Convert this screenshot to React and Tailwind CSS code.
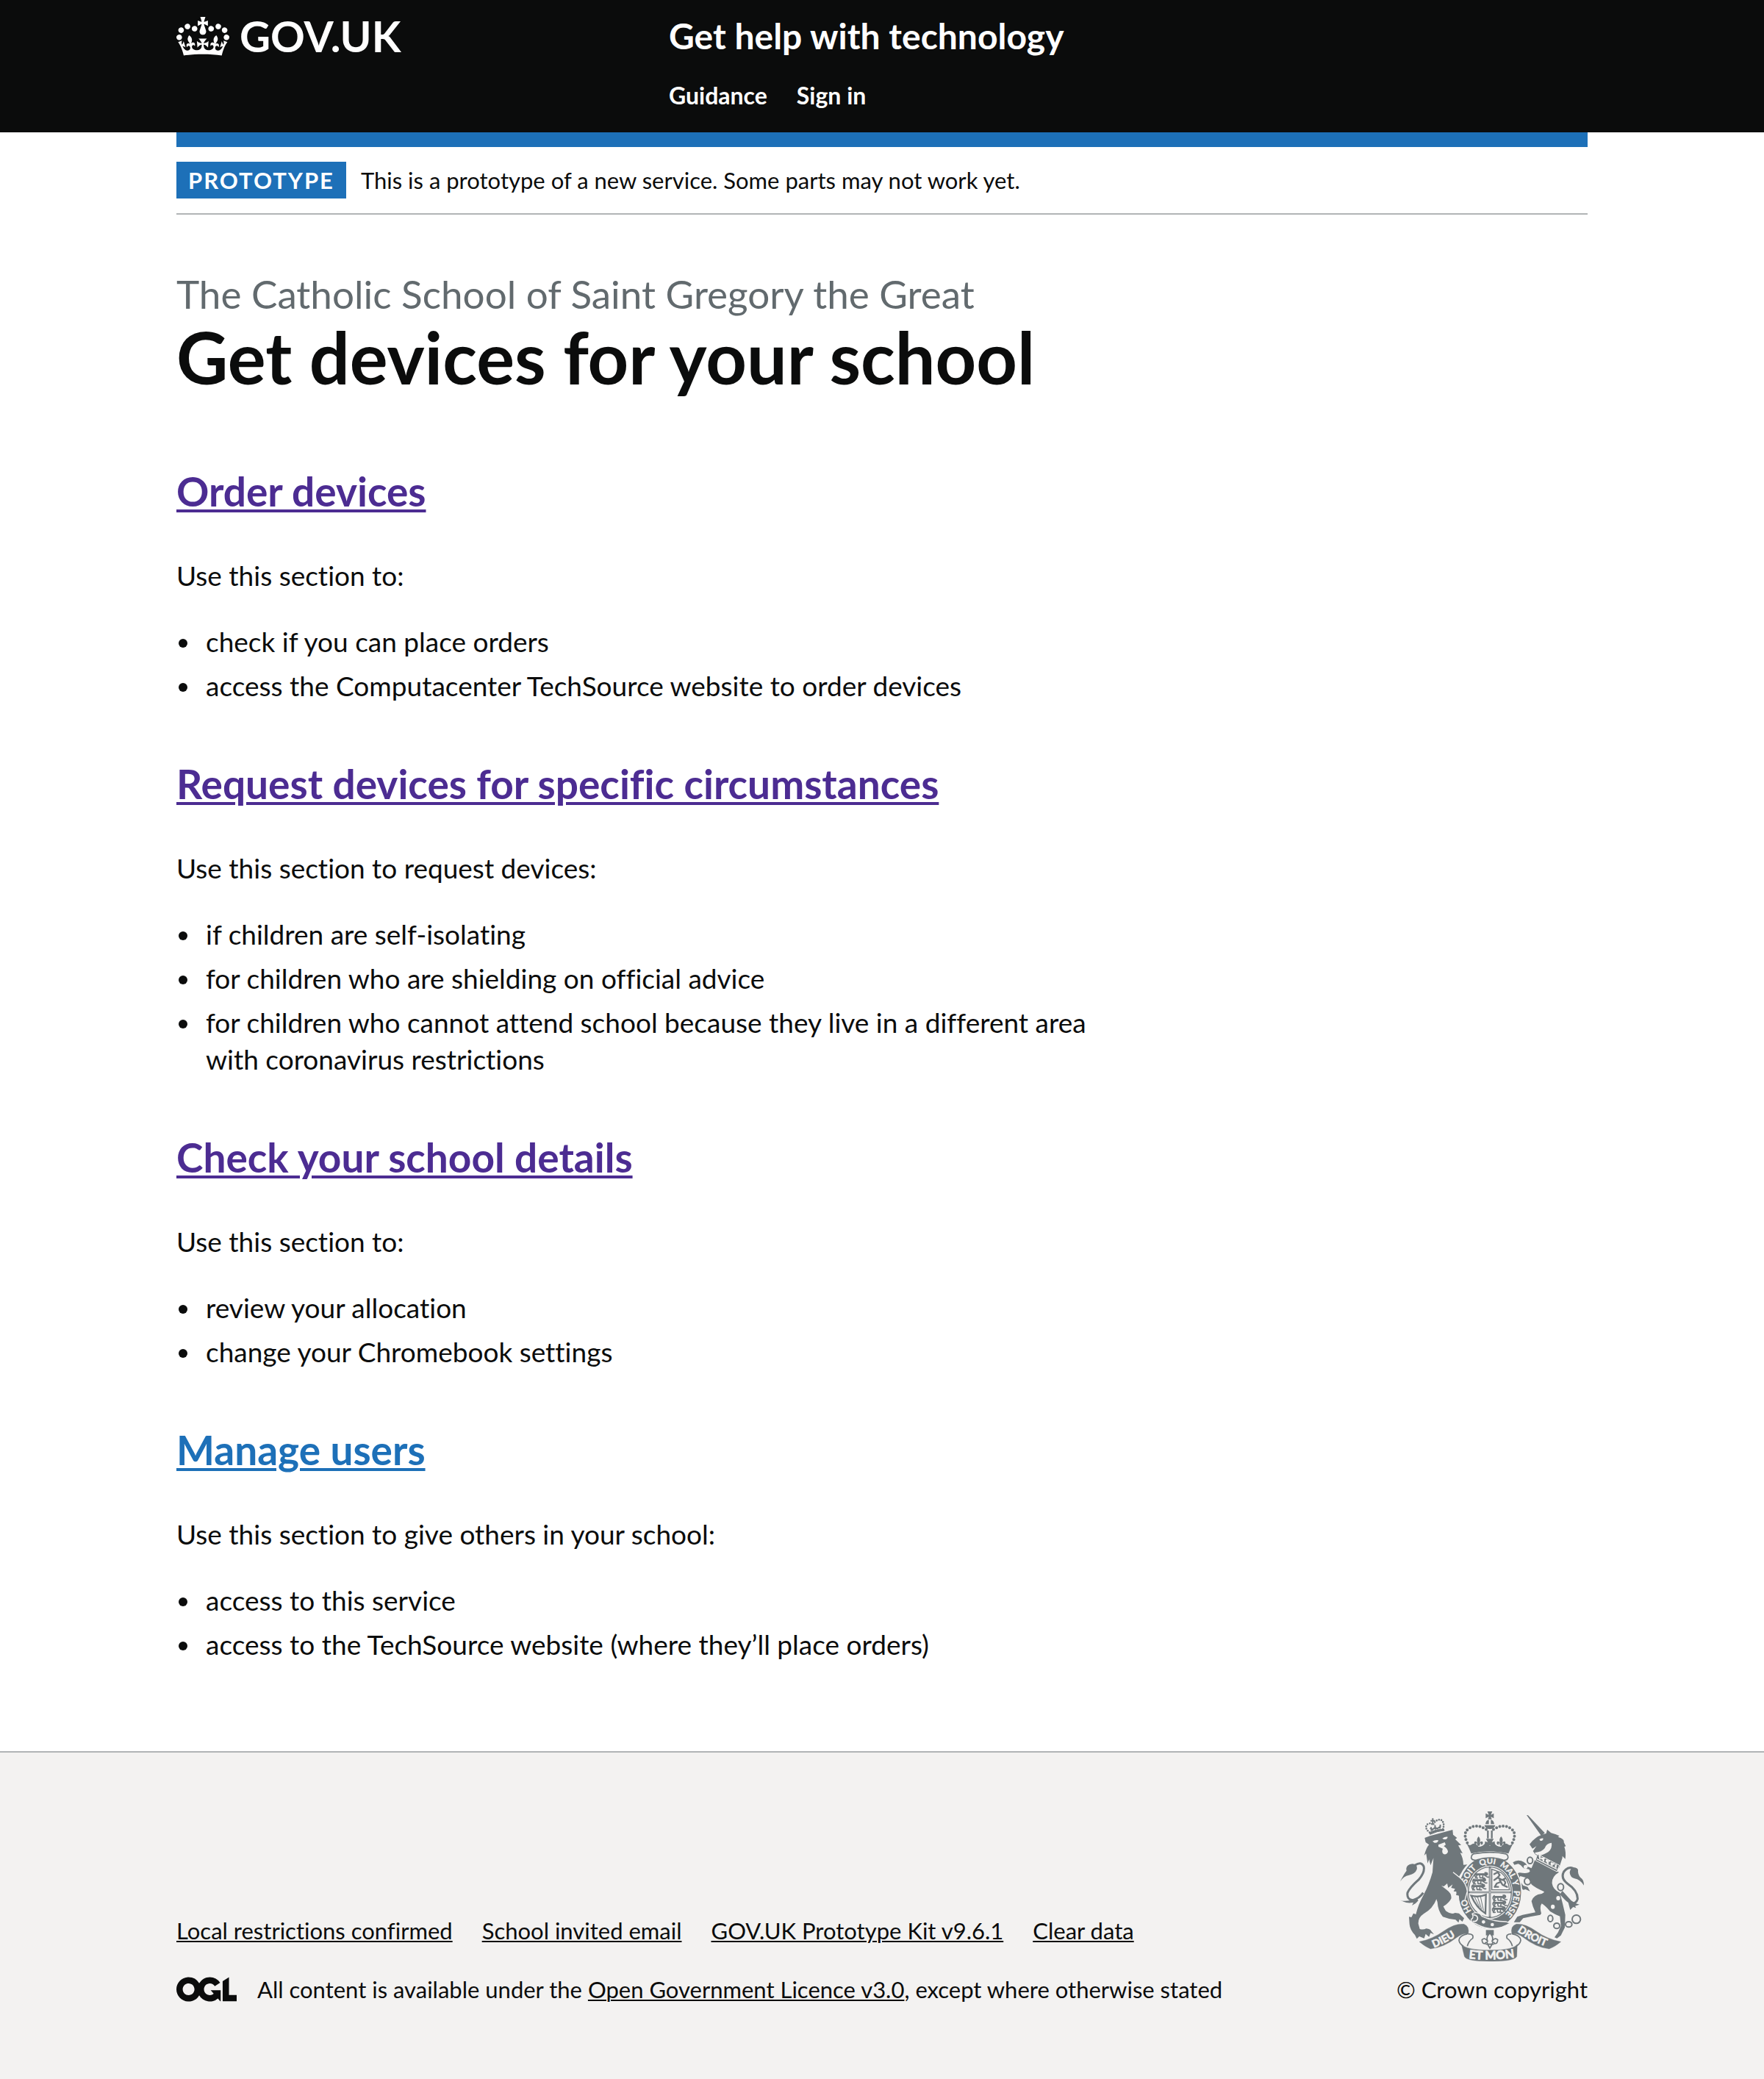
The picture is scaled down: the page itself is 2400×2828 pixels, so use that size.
const sections = [
  {
    title: "Order devices",
    visited: true,
    intro: "Use this section to:",
    items: ["check if you can place orders", "access the Computacenter TechSource website to order devices"],
  },
  {
    title: "Request devices for specific circumstances",
    visited: true,
    intro: "Use this section to request devices:",
    items: [
      "if children are self-isolating",
      "for children who are shielding on official advice",
      "for children who cannot attend school because they live in a different area with coronavirus restrictions",
    ],
  },
  {
    title: "Check your school details",
    visited: true,
    intro: "Use this section to:",
    items: ["review your allocation", "change your Chromebook settings"],
  },
  {
    title: "Manage users",
    visited: false,
    intro: "Use this section to give others in your school:",
    items: ["access to this service", "access to the TechSource website (where they’ll place orders)"],
  },
];

const footerLinks = ["Local restrictions confirmed", "School invited email", "GOV.UK Prototype Kit v9.6.1", "Clear data"];

function Crown() {
  return (
    <svg aria-hidden="true" viewBox="0 0 132 97" className="h-[53px] w-[72px]" fill="currentColor">
      <path d="M25 30.2c3.5 1.5 7.7-.2 9.1-3.7 1.5-3.6-.2-7.8-3.9-9.2-3.6-1.4-7.6.3-9.1 3.9-1.4 3.5.3 7.5 3.9 9zM9 39.5c3.6 1.5 7.8-.2 9.2-3.7 1.5-3.6-.2-7.8-3.9-9.1-3.6-1.5-7.6.2-9.1 3.8-1.4 3.5.3 7.5 3.8 9zM4.4 57.2c3.5 1.5 7.7-.2 9.1-3.8 1.5-3.6-.2-7.7-3.9-9.1-3.5-1.5-7.6.3-9.1 3.8-1.4 3.5.3 7.6 3.9 9.1zm38.3-21.4c3.5 1.5 7.7-.2 9.1-3.8 1.5-3.6-.2-7.7-3.9-9.1-3.6-1.5-7.6.3-9.1 3.8-1.3 3.6.4 7.7 3.9 9.1zm64.4-5.6c-3.6 1.5-7.8-.2-9.1-3.7-1.5-3.6.2-7.8 3.8-9.2 3.6-1.4 7.7.3 9.2 3.9 1.3 3.5-.4 7.5-3.9 9zm15.9 9.3c-3.6 1.5-7.7-.2-9.1-3.7-1.5-3.6.2-7.8 3.7-9.1 3.6-1.5 7.7.2 9.2 3.8 1.5 3.5-.3 7.5-3.8 9zm4.7 17.7c-3.6 1.5-7.8-.2-9.2-3.8-1.5-3.6.2-7.7 3.9-9.1 3.6-1.5 7.7.3 9.2 3.8 1.3 3.5-.4 7.6-3.9 9.1zM89.3 35.8c-3.6 1.5-7.8-.2-9.2-3.8-1.4-3.6.2-7.7 3.9-9.1 3.6-1.5 7.7.3 9.2 3.8 1.4 3.6-.3 7.7-3.9 9.1zM69.7 17.7l8.9 4.7V9.3l-8.9 2.8c-.2-.3-.5-.6-.9-.9L72.4 0H59.6l3.5 11.2c-.3.3-.6.5-.9.9l-8.8-2.8v13.1l8.8-4.7c.3.3.6.7.9.9l-5 15.4v.1c-.2.8-.4 1.6-.4 2.4 0 4.1 3.1 7.5 7 8.1h.2c.3 0 .7.1 1 .1.4 0 .7 0 1-.1h.2c4-.6 7.1-4.1 7.1-8.1 0-.8-.1-1.7-.4-2.4V34l-5.1-15.4c.4-.2.7-.6 1-.9zM66 92.8c16.9 0 32.8 1.1 47.1 3.2 4-16.9 8.9-26.7 14-33.5l-9.6-3.4c1 4.9 1.1 7.2 0 10.2-1.5-1.4-3-4.3-4.2-8.7L108.6 76c2.8-2 5-3.2 7.5-3.3-4.4 9.4-10 11.9-13.6 11.2-4.3-.8-6.3-4.6-5.6-7.9 1-4.7 5.7-5.9 8-.5 4.3-8.7-3-11.4-7.6-8.8 7.1-7.2 7.9-13.5 2.1-21.1-8 6.1-8.1 12.3-4.5 20.8-4.7-5.4-12.1-2.5-9.5 6.2 3.4-5.2 7.9-2 7.2 3.1-.6 4.3-6.4 7.8-13.5 7.2-10.3-.9-10.9-8-11.2-13.8 2.5-.5 7.1 1.8 11 7.3L80.2 60c-4.1 4.4-8 5.3-12.3 5.4 1.4-4.4 8-11.6 8-11.6H55.5s6.4 7.2 7.9 11.6c-4.2-.1-8-1-12.3-5.4l1.4 16.4c3.9-5.5 8.5-7.7 10.9-7.3-.3 5.8-.9 12.8-11.1 13.8-7.2.6-12.9-2.9-13.5-7.2-.7-5 3.8-8.3 7.1-3.1 2.7-8.7-4.6-11.6-9.4-6.2 3.7-8.5 3.6-14.7-4.6-20.8-5.8 7.6-5 13.9 2.2 21.1-4.7-2.6-11.9.1-7.7 8.8 2.3-5.5 7.1-4.2 8.1.5.7 3.3-1.3 7.1-5.7 7.9-3.5.7-9-1.8-13.5-11.2 2.5.1 4.7 1.3 7.5 3.3l-4.7-15.4c-1.2 4.4-2.7 7.2-4.3 8.7-1.1-3-.9-5.3 0-10.2l-9.5 3.4c5 6.9 9.9 16.7 14 33.5 14.8-2.1 30.8-3.2 47.7-3.2z" />
    </svg>
  );
}

function OglLogo() {
  return (
    <svg aria-hidden="true" viewBox="0 0 483.2 195.7" className="h-[34px] w-[82px]" fill="currentColor">
      <path d="M421.5 142.8V.1l-50.7 32.3v161.1h112.4v-50.7zm-122.3-9.6A47.12 47.12 0 0 1 221 97.8c0-26 21.1-47.1 47.1-47.1 16.7 0 31.4 8.7 39.7 21.8l42.7-27.2A97.63 97.63 0 0 0 268.1 0c-36.5 0-68.3 20.1-85.1 49.7A98 98 0 0 0 97.8 0C43.9 0 0 43.9 0 97.8s43.9 97.8 97.8 97.8c36.5 0 68.3-20.1 85.1-49.7a97.76 97.76 0 0 0 149.6 25.4l19.4 22.2h3v-87.8h-80l24.3 27.5zM97.8 145c-26 0-47.1-21.1-47.1-47.1s21.1-47.1 47.1-47.1 47.1 21.1 47.1 47.1S123.8 145 97.8 145" />
    </svg>
  );
}

const G = "#6f777b";
const P = "#f3f2f1";

function Fleur({ x, y }) {
  return (
    <g transform={`translate(${x} ${y})`} fill={G}>
      <path d="M0-18Q12-4 3 8Q16-4 18 8Q17 18 9 15Q12 8 7 10L4 20H-4L-7 10Q-12 8-9 15Q-17 18-18 8Q-16-4-3 8Q-12-4 0-18Z" />
    </g>
  );
}

function PassantLion({ x, y }) {
  return (
    <g transform={`translate(${x} ${y})`} fill="none" stroke={G} strokeWidth="5" strokeLinecap="round" strokeLinejoin="round">
      <path d="M4 10Q0 0 8-4M6 2L40 0M44-6Q56-8 54 2L44 6M12 4L6 16H14M22 4L24 15H31M36 4L34 16H42M42 4L54 12H60" />
      <path d="M10 1H42L50-2" strokeWidth="8" />
    </g>
  );
}

function RoyalArms() {
  return (
    <svg aria-hidden="true" viewBox="72 72 750 612" className="h-[204px] w-[250px]">
      <defs>
        <path id="garter" d="M438 518A98 116 0 0 1 438 286A98 116 0 0 1 438 518" />
        <path id="dieu" d="M210 628Q265 606 318 568" />
        <path id="droit" d="M550 562Q605 600 674 626" />
        <path id="etmon" d="M352 672Q438 682 526 670" />
      </defs>

      {/* Lion */}
      <g fill={G}>
        <path d="M172 180L194 172L286 147L288 167L304 180L297 186L321 209L309 211L327 243L317 241Q330 264 330 290L346 289Q330 305 322 322L312 338L290 320L318 350Q340 370 344 398L340 414L336 434L326 424L318 438L313 416L300 413L306 400L290 398L296 388L280 384L286 370L268 384L264 366L250 378L240 375L262 392Q284 408 280 428Q270 446 248 460L258 478Q280 494 296 486L312 488L320 496L333 508L326 522L314 512L310 526L298 514Q270 512 246 502Q226 478 224 442L220 430Q205 470 168 490Q145 505 146 530L152 552Q168 556 178 550Q196 552 200 562L210 574L196 568L190 584L176 572L170 590L150 582L140 592L132 576Q112 556 110 532L108 502L118 504L126 488L136 492Q146 452 168 412Q190 370 204 320L208 262L196 292L190 268L184 284L178 244L170 252Q180 216 190 208L176 198Z" />
        <path d="M72 358Q88 326 98 314Q92 290 122 286Q144 288 140 308Q134 326 108 332Q86 336 72 358Z" />
        <path d="M72 434Q96 444 140 426L146 436Q136 450 120 456L126 444Q100 448 86 440Z" />
      </g>
      <path d="M132 292Q158 274 168 296Q174 320 148 350Q110 384 102 404Q98 432 124 434Q150 428 166 404" fill="none" stroke={G} strokeWidth="9" />
      <g fill={P}>
        <path d="M204 194Q216 186 228 190Q226 202 212 200Z" />
        <path d="M244 182Q256 174 266 176Q264 188 250 186Z" />
        <path d="M228 208L254 198L258 208L250 214Q270 226 266 240Q260 250 249 246Q240 238 246 224L228 216Z" />
      </g>
      {/* Lion's crown */}
      <g fill="none" stroke={G}>
        <path d="M192 158Q168 138 184 124Q198 116 206 128Q216 104 238 106Q256 118 246 146" strokeWidth="8" strokeLinecap="round" strokeDasharray="0 10" />
        <path d="M192 158Q218 144 250 144L252 150Q222 152 194 166Z" fill={G} strokeWidth="3" />
        <path d="M205 100V120M196 110H214M200 152L198 136M216 146L214 128M234 142L236 126M194 140L204 146L214 138L224 142L238 132" strokeWidth="6" />
      </g>

      {/* Unicorn */}
      <g fill={G}>
        <path d="M588 87L594 88L662 160L648 172Z" />
        <path d="M600 206L612 192Q636 168 668 162L672 146L688 160Q706 164 722 172L716 176Q744 184 740 198L748 214L742 216Q750 240 746 266L734 254L734 262L720 304L632 254Q620 246 614 234L628 214L612 224Z" />
        <path d="M622 270L720 320Q690 338 692 366Q696 392 724 404Q736 450 746 494L744 546L736 562L728 578L712 590L702 586L716 566L728 540L724 500Q706 494 684 480Q664 456 650 448Q640 460 648 488L644 494Q606 500 574 508L560 524L536 524L550 502L572 494L624 484Q612 460 608 438Q616 412 650 408Q660 404 660 400Q620 382 608 370Q596 340 584 342L562 336L556 350L574 374L592 380L602 398L584 390L574 392Q554 372 544 344Q546 322 560 322Q596 328 602 316L598 308L576 304Q566 290 554 286L538 290L532 280Q548 268 566 274Q588 282 590 296L608 304Z" />
        <path d="M822 374Q806 350 784 346Q766 342 764 322Q766 304 778 300Q792 300 798 310Q796 330 808 342Q822 350 822 374Z" />
        <path d="M724 410Q746 436 758 444L766 474L778 462L790 466L786 458L804 452Q784 448 770 436L734 396Z" />
      </g>
      <path d="M778 304Q756 296 740 318Q726 344 754 366Q798 396 796 430Q790 450 766 448" fill="none" stroke={G} strokeWidth="9" />
      <path d="M622 240Q650 238 662 222Q668 202 690 200Q694 222 676 238Q656 250 640 252L624 246Z" fill={P} />
      <path d="M640 186Q648 180 656 182Q656 192 644 192Z" fill={P} />
      {/* Coronet collar */}
      <g stroke={P} strokeWidth="3">
        <path d="M632 246L722 292L712 318L624 272Z" fill={G} />
        <path d="M630 266L712 308" strokeWidth="4" />
        <path d="M640 250L644 268M654 262L658 276M670 268L676 286M690 280L692 294M708 288L706 302M648 264H662M666 274H684M686 286H702" strokeWidth="7" />
      </g>
      {/* Chain */}
      <g fill="none" stroke={G} strokeWidth="6">
        <ellipse cx="602" cy="272" rx="11" ry="13" />
        <ellipse cx="592" cy="357" rx="13" ry="14" />
        <ellipse cx="727" cy="381" rx="12" ry="14" fill={P} />
        <ellipse cx="685" cy="509" rx="10" ry="13" />
        <ellipse cx="711" cy="539" rx="12" ry="11" />
        <ellipse cx="760" cy="533" rx="13" ry="11" />
        <circle cx="791" cy="512" r="17" />
      </g>
      <circle cx="584" cy="298" r="8" fill={P} />
      <ellipse cx="717" cy="426" rx="8" ry="9" fill={P} />
      <ellipse cx="695" cy="461" rx="8" ry="9" fill={P} />

      {/* Garter and shield */}
      <ellipse cx="438" cy="402" rx="130" ry="150" fill={G} stroke={P} strokeWidth="5" />
      <ellipse cx="438" cy="402" rx="93" ry="109" fill={P} />
      <ellipse cx="438" cy="402" rx="88" ry="103" fill={P} stroke={G} strokeWidth="4" />
      <path d="M438 296V508M348 402H528" stroke={G} strokeWidth="8" />
      <path d="M438 304V500M356 402H520" stroke={P} strokeWidth="2" />
      <PassantLion x={374} y={328} />
      <PassantLion x={366} y={352} />
      <PassantLion x={362} y={376} />
      <PassantLion x={448} y={420} />
      <PassantLion x={448} y={444} />
      <PassantLion x={446} y={468} />
      <path d="M446 308V392H518Q514 346 484 322Z" fill="none" stroke={G} strokeWidth="4" />
      <path d="M456 328L470 320L478 332L470 342L488 352L500 346M470 342L456 352M478 352L490 372L508 380M482 360L466 366L458 380M458 380H472M494 352Q506 362 498 370" fill="none" stroke={G} strokeWidth="7" strokeLinecap="round" strokeLinejoin="round" />
      <path d="M362 416Q392 424 422 412L420 488Q384 466 362 416Z" fill="none" stroke={G} strokeWidth="7" />
      <path d="M376 422L396 462M388 422L404 470M400 420L412 476" stroke={G} strokeWidth="3" />
      <g fill={P} stroke={P} fontFamily='"Lato", sans-serif' fontWeight="700" fontSize="34">
        <text><textPath href="#garter" startOffset="13%">HO</textPath></text>
        <text><textPath href="#garter" startOffset="30%">SOIT</textPath></text>
        <text><textPath href="#garter" startOffset="44%">QUI</textPath></text>
        <text><textPath href="#garter" startOffset="56%">MAL</textPath></text>
        <text><textPath href="#garter" startOffset="68%">Y</textPath></text>
        <text><textPath href="#garter" startOffset="74%">PENSE</textPath></text>
      </g>
      <path d="M366 490Q380 480 398 490L406 500Q450 522 504 522L520 528Q484 552 440 550Q404 546 380 530Q360 528 362 512Q374 506 366 490Z" fill={G} stroke={P} strokeWidth="4" />
      <path d="M370 494Q390 496 388 510Q384 524 368 520" fill="none" stroke={P} strokeWidth="5" />
      <circle cx="412" cy="523" r="7" fill={P} />
      <circle cx="448" cy="534" r="7" fill={P} />
      {/* Foreleg over the garter */}
      <path d="M288 320L318 344Q342 366 346 398L342 412L336 434L326 424L318 438L313 416L302 413L300 380Z" fill={G} />
      <path d="M288 320L318 344Q342 366 346 398L342 412L336 434" fill="none" stroke={P} strokeWidth="4" />

      {/* Imperial crown */}
      <path d="M362 262Q362 244 380 244Q438 234 496 244Q514 246 512 262Q508 274 492 270Q438 252 384 270Q366 274 362 262Z" fill={P} stroke={G} strokeWidth="5" />
      <path d="M342 200Q352 214 362 208Q374 196 392 216Q410 216 420 200L438 212L456 200Q464 216 484 216Q502 196 514 208Q522 214 534 200Q522 222 514 244Q438 226 362 244Q354 222 342 200Z" fill={G} />
      <g fill="none" stroke={G} strokeWidth="12" strokeLinecap="round" strokeDasharray="0 14">
        <path d="M346 200Q326 160 352 142Q384 120 424 146" />
        <path d="M530 200Q550 160 524 142Q492 120 452 146" />
      </g>
      <Fleur x={392} y={192} />
      <Fleur x={484} y={192} />
      <path d="M430 150V182M446 150V182" stroke={G} strokeWidth="7" />
      <path d="M422 184H454L446 198L458 194V216L438 210L418 216V194L430 198Z" fill={G} />
      <path d="M416 128H460Q456 144 438 144Q420 144 416 128Z" fill={G} />
      <path d="M420 124Q422 108 434 106V124ZM456 124Q454 108 442 106V124Z" fill={G} />
      <path d="M428 72H448L442 86L454 80V100L442 94L446 104H430L434 94L421 100V80L434 86Z" fill={G} />

      {/* Motto scroll */}
      <g fill={G} stroke={G} strokeLinejoin="round">
        <path d="M150 604Q206 592 250 560Q296 528 332 532Q356 540 350 574Q330 566 304 586Q250 628 196 633Q176 626 150 604Z" />
        <path d="M728 604Q670 592 626 560Q580 528 546 532Q520 540 528 574Q548 566 574 586Q628 628 680 633Q702 626 728 604Z" />
        <path d="M322 614Q342 638 438 638Q534 638 550 614L548 664Q540 684 438 684Q342 684 334 664Z" />
      </g>
      <g fill="none" stroke={G} strokeWidth="5">
        <path d="M350 572Q374 572 368 590Q352 600 346 622M346 572Q314 578 312 598Q314 612 330 622" />
        <path d="M526 572Q502 572 508 590Q524 600 530 622M530 572Q562 578 564 598Q562 612 546 622" />
      </g>
      <g fill={P} stroke={P} strokeWidth="2" fontFamily='"Lato", sans-serif' fontWeight="700" fontSize="42">
        <text><textPath href="#dieu">DIEU</textPath></text>
        <text><textPath href="#droit">DROIT</textPath></text>
        <text fontSize="48"><textPath href="#etmon">ET MON</textPath></text>
      </g>
      {/* Lily below the shield */}
      <path d="M422 556H454V578H422Z" fill={G} />
      <path d="M438 568Q456 586 446 604Q458 584 470 596Q470 612 456 612Q458 606 450 606L446 616L438 630L430 616L426 606Q418 606 420 612Q406 612 406 596Q418 584 430 604Q420 586 438 568ZM422 614H454" fill={P} stroke={G} strokeWidth="5" />
    </svg>
  );
}

export default function App() {
  return (
    <div className="bg-white font-['Lato',sans-serif] text-[37px]/[50px] text-[#0b0c0c] [font-variant-ligatures:none]">
      <header className="bg-[#0b0c0c] pt-[22px] pb-[30px] text-white">
        <div className="mx-auto flex max-w-[1920px] items-start">
          <div className="w-[670px]">
            <a href="#" className="inline-flex items-center gap-[14px] text-[58px]/[54px] font-bold">
              <Crown />
              <span>GOV.UK</span>
            </a>
          </div>
          <div>
            <a href="#" className="block text-[48px]/[54px] font-bold">Get help with technology</a>
            <nav className="mt-[34px] flex gap-10 text-[32px]/[40px] font-bold">
              <a href="#">Guidance</a>
              <a href="#">Sign in</a>
            </nav>
          </div>
        </div>
      </header>

      <div className="mx-auto max-w-[1920px]">
        <div className="h-5 bg-[#1d70b8]" />
        <div className="flex items-center gap-5 border-b-2 border-[#b1b4b6] py-5 text-[31px]/[50px]">
          <strong className="bg-[#1d70b8] px-4 font-bold tracking-[2px] text-white">PROTOTYPE</strong>
          <span>This is a prototype of a new service. Some parts may not work yet.</span>
        </div>

        <main className="w-2/3 pt-[78px] pb-[110px]">
          <h1>
            <span className="mb-[6px] block text-[53px]/[60px] text-[#626a6e]">The Catholic School of Saint Gregory the Great</span>
            <span className="block text-[97px]/[100px] font-bold">Get devices for your school</span>
          </h1>
          <div className="mt-[102px] flex flex-col gap-[68px]">
            {sections.map((s) => (
              <section key={s.title}>
                <h2 className="mb-[60px] text-[55px]/[60px] font-bold">
                  <a
                    href="#"
                    className={`underline decoration-4 underline-offset-4 ${s.visited ? "text-[#4c2c92]" : "text-[#1d70b8]"}`}
                  >
                    {s.title}
                  </a>
                </h2>
                <p className="mb-10">{s.intro}</p>
                <ul className="list-disc pl-[34px]">
                  {s.items.map((item) => (
                    <li key={item} className="mb-[10px] pl-[6px]">{item}</li>
                  ))}
                </ul>
              </section>
            ))}
          </div>
        </main>
      </div>

      <footer className="border-t-2 border-[#b1b4b6] bg-[#f3f2f1] pt-20 pb-[102px] text-[31px]/[40px]">
        <div className="mx-auto flex max-w-[1920px] items-end justify-between">
          <div>
            <div className="mb-10 flex gap-10">
              {footerLinks.map((l) => (
                <a key={l} href="#" className="underline decoration-2 underline-offset-2">{l}</a>
              ))}
            </div>
            <div className="flex items-center gap-7">
              <OglLogo />
              <span>
                All content is available under the{" "}
                <a href="#" className="underline decoration-2 underline-offset-2">Open Government Licence v3.0</a>, except where otherwise stated
              </span>
            </div>
          </div>
          <a href="#" className="flex flex-col items-center gap-[18px]">
            <RoyalArms />
            <span>© Crown copyright</span>
          </a>
        </div>
      </footer>
    </div>
  );
}
